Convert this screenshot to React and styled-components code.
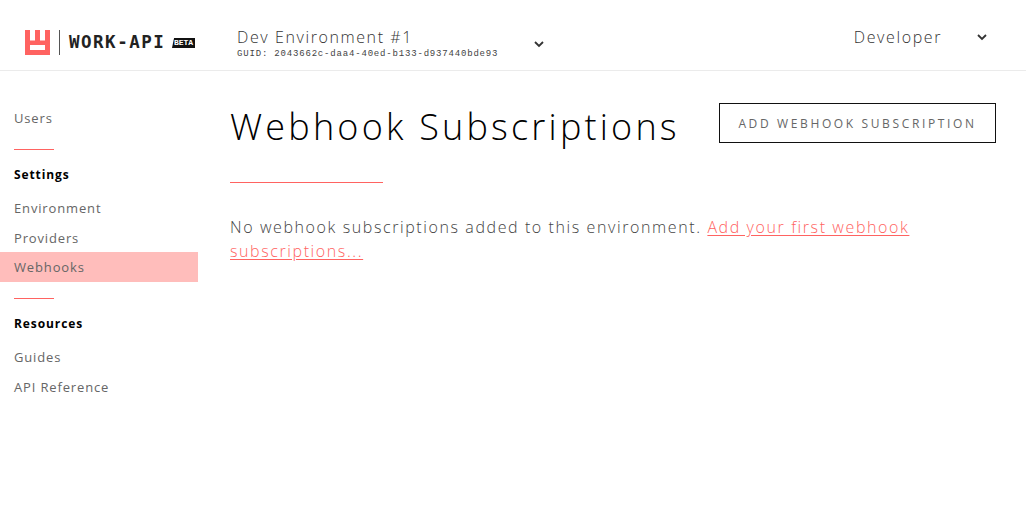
import React from 'react';
import styled, { createGlobalStyle } from 'styled-components';

const Global = createGlobalStyle`
  html, body { margin: 0; padding: 0; background: #fff; }
  body { font-family: "Open Sans", sans-serif; font-weight: 300; color: #111; }
  * { box-sizing: border-box; }
`;

const Page = styled.div`
  width: 1026px;
  height: 510px;
  overflow: hidden;
`;

const Header = styled.header`
  height: 71px;
  border-bottom: 1px solid #ebebeb;
  display: flex;
  align-items: flex-start;
`;

const Logo = styled.div`
  width: 237px;
  padding: 30px 0 0 25px;
  display: flex;
  align-items: center;
  height: 55px;
`;

const Divider = styled.div`
  width: 1px;
  height: 25px;
  background: #555;
  margin: 0 9px;
`;

const Wordmark = styled.span`
  font-family: "DejaVu Sans Mono", monospace;
  font-weight: 700;
  font-size: 17.5px;
  letter-spacing: 1.5px;
  color: #222;
  line-height: 1;
  width: 103px;
  flex: none;
  margin-top: 1px;
`;

const Beta = styled.span`
  font-family: "Liberation Mono", monospace;
  font-weight: 700;
  font-size: 8px;
  line-height: 10px;
  height: 10px;
  width: 23px;
  text-align: center;
  margin-top: 1px;
  background: #111;
  color: #fff;
  clip-path: polygon(9% 0, 100% 0, 100% 100%, 0 100%);
`;

const EnvBlock = styled.div`
  width: 296px;
  padding-top: 26px;
`;

const EnvName = styled.div`
  font-size: 16px;
  line-height: 22px;
  letter-spacing: 1.6px;
  color: #333;
`;

const Guid = styled.div`
  font-family: "Liberation Mono", monospace;
  font-weight: 400;
  font-size: 9px;
  line-height: 12px;
  letter-spacing: 0.82px;
  color: #444;
`;

const Chevron = styled.svg`
  width: 12px;
  height: 12px;
  fill: none;
  stroke: #333;
  stroke-width: 1.8;
  flex: none;
  margin-top: ${p => p.$top}px;
`;

const RoleBlock = styled.div`
  margin-left: auto;
  display: flex;
  align-items: flex-start;
  padding: 26px 38px 0 0;
`;

const Role = styled.div`
  font-size: 16px;
  line-height: 22px;
  letter-spacing: 1.6px;
  color: #333;
  margin-right: 34px;
`;

const Body = styled.div`
  display: flex;
`;

const Sidebar = styled.nav`
  width: 198px;
  padding-top: 32px;
  flex: none;
`;

const NavItem = styled.div`
  height: 29.6px;
  line-height: 30px;
  padding-left: 14px;
  font-size: 13px;
  font-weight: 400;
  letter-spacing: 0.85px;
  color: #666;
  background: ${p => (p.$active ? '#ffbdbb' : 'transparent')};
`;

const Rule = styled.div`
  width: 40px;
  height: 1px;
  background: #ff6361;
  margin: 16px 0 16px 14px;
`;

const SectionTitle = styled.div`
  padding-left: 14px;
  font-size: 12px;
  line-height: 17px;
  font-weight: 700;
  letter-spacing: 0.9px;
  color: #000;
  margin-bottom: 10.4px;
`;

const Main = styled.main`
  flex: 1;
  padding: 32px 30px 0 32px;
`;

const TitleRow = styled.div`
  display: flex;
  justify-content: space-between;
  align-items: flex-start;
`;

const Title = styled.h1`
  margin: 0;
  font-size: 36px;
  line-height: 48px;
  font-weight: 300;
  letter-spacing: 3.2px;
  color: #000;
`;

const AddButton = styled.button`
  width: 277px;
  height: 40px;
  background: #fff;
  border: 1px solid #111;
  font-family: "Open Sans", sans-serif;
  font-weight: 400;
  font-size: 12px;
  letter-spacing: 2.63px;
  color: #666;
  padding: 0;
`;

const TitleRule = styled.div`
  width: 153px;
  height: 1px;
  background: #ff6361;
  margin: 31px 0 32px;
`;

const Message = styled.p`
  margin: 0;
  font-size: 16px;
  line-height: 24px;
  letter-spacing: 1.6px;
  color: #444;
`;

const FirstLink = styled.a`
  color: #ff6361;
  text-decoration: underline;
  text-underline-offset: 2px;
`;

const ChevronIcon = ({ top }) => (
  <Chevron $top={top} viewBox="0 0 12 12">
    <path d="M2 4l4 4 4-4" />
  </Chevron>
);

export default function App() {
  return (
    <Page>
      <Global />
      <Header>
        <Logo>
          <svg width="25" height="25" viewBox="0 0 25 25">
            <rect width="25" height="25" fill="#ff6361" />
            <rect x="5" y="0" width="5" height="10.5" fill="#fff" />
            <rect x="15" y="0" width="5" height="10.5" fill="#fff" />
            <rect x="5" y="15" width="15" height="5" fill="#fff" />
          </svg>
          <Divider />
          <Wordmark>WORK-API</Wordmark>
          <Beta>BETA</Beta>
        </Logo>
        <EnvBlock>
          <EnvName>Dev Environment #1</EnvName>
          <Guid>GUID: 2043662c-daa4-40ed-b133-d937440bde93</Guid>
        </EnvBlock>
        <ChevronIcon top={38} />
        <RoleBlock>
          <Role>Developer</Role>
          <ChevronIcon top={5} />
        </RoleBlock>
      </Header>
      <Body>
        <Sidebar>
          <NavItem>Users</NavItem>
          <Rule />
          <SectionTitle>Settings</SectionTitle>
          <NavItem>Environment</NavItem>
          <NavItem>Providers</NavItem>
          <NavItem $active>Webhooks</NavItem>
          <Rule />
          <SectionTitle>Resources</SectionTitle>
          <NavItem>Guides</NavItem>
          <NavItem>API Reference</NavItem>
        </Sidebar>
        <Main>
          <TitleRow>
            <Title>Webhook Subscriptions</Title>
            <AddButton>ADD WEBHOOK SUBSCRIPTION</AddButton>
          </TitleRow>
          <TitleRule />
          <Message>
            No webhook subscriptions added to this environment.{' '}
            <FirstLink href="#">Add your first webhook subscriptions...</FirstLink>
          </Message>
        </Main>
      </Body>
    </Page>
  );
}
